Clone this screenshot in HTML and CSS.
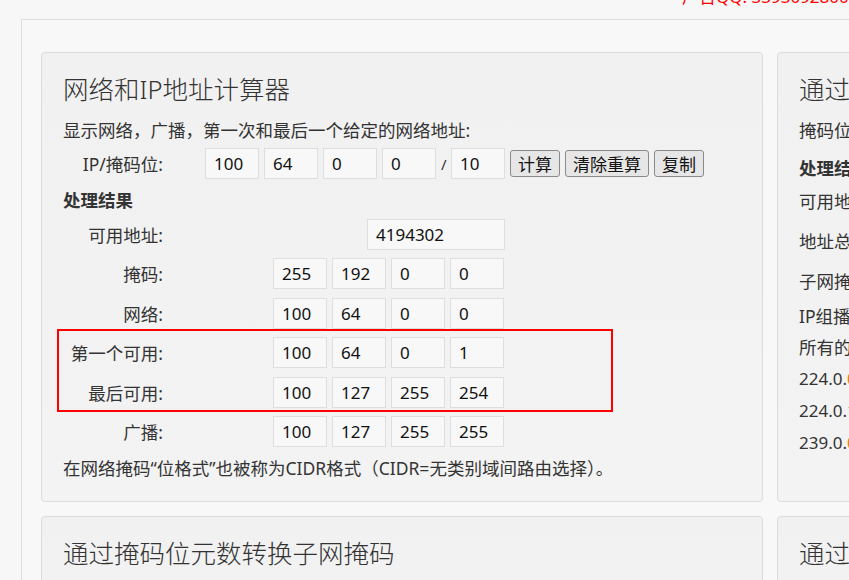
FILE: index.html
```html
<!DOCTYPE html>
<html lang="zh-CN">
<head>
    <meta charset="UTF-8">
    <title>网络和IP地址计算器</title>
    <link rel="stylesheet" href="styles.css">
</head>
<body>
    <div class="topbar"><div class="ad">广告QQ: 3393092800</div></div>
    <div class="wrap">
        <div class="grid">
            <div class="card">
                <h2>网络和IP地址计算器</h2>
                <p class="intro">显示网络，广播，第一次和最后一个给定的网络地址:</p>
                <div class="ip-row">
                    <label class="label">IP/掩码位:</label>
                    <div class="ip-fields">
                        <input class="box" value="100">
                        <input class="box" value="64">
                        <input class="box" value="0">
                        <input class="box" value="0">
                        <span class="slash">/</span>
                        <input class="box" value="10">
                        <button class="btn">计算</button>
                        <button class="btn">清除重算</button>
                        <button class="btn">复制</button>
                    </div>
                </div>
                <div class="result-title">处理结果</div>
                <div class="results">
                    <div class="res-row">
                        <span class="label">可用地址:</span>
                        <input class="box wide" value="4194302">
                    </div>
                    <div class="res-row">
                        <span class="label">掩码:</span>
                        <input class="box" value="255"><input class="box" value="192"><input class="box" value="0"><input class="box" value="0">
                    </div>
                    <div class="res-row">
                        <span class="label">网络:</span>
                        <input class="box" value="100"><input class="box" value="64"><input class="box" value="0"><input class="box" value="0">
                    </div>
                    <div class="highlight">
                        <div class="res-row">
                            <span class="label">第一个可用:</span>
                            <input class="box" value="100"><input class="box" value="64"><input class="box" value="0"><input class="box" value="1">
                        </div>
                        <div class="res-row">
                            <span class="label">最后可用:</span>
                            <input class="box" value="100"><input class="box" value="127"><input class="box" value="255"><input class="box" value="254">
                        </div>
                    </div>
                    <div class="res-row">
                        <span class="label">广播:</span>
                        <input class="box" value="100"><input class="box" value="127"><input class="box" value="255"><input class="box" value="255">
                    </div>
                </div>
                <p class="note">在网络掩码“位格式”也被称为CIDR格式（CIDR=无类别域间路由选择）。</p>
            </div>

            <div class="card">
                <h2>通过掩码位计算子网掩码</h2>
                <p class="side-line">掩码位数:</p>
                <p class="side-line bold">处理结果</p>
                <p class="side-line tall">可用地址:</p>
                <p class="side-line tall">地址总数:</p>
                <p class="side-line tall">子网掩码:</p>
                <p class="side-line">IP组播地址</p>
                <p class="side-line">所有的组播地址</p>
                <p class="side-line mono">224.0.<span class="hl">0</span>.0 - 224.0.0.255</p>
                <p class="side-line mono">224.0.1.0 - 238.255.255.255</p>
                <p class="side-line mono">239.0.<span class="hl">0</span>.0 - 239.255.255.255</p>
            </div>

            <div class="card">
                <h2>通过掩码位元数转换子网掩码</h2>
            </div>
            <div class="card">
                <h2>通过子网掩码转换掩码位元数</h2>
            </div>
        </div>
    </div>
</body>
</html>
```

FILE: styles.css
```css
body {
    margin: 0;
    background-color: #f7f7f7;
    color: #333;
    font-family: "Noto Sans", "Noto Sans CJK SC", sans-serif;
    font-size: 17.5px;
    overflow: hidden;
}
.topbar {
    height: 19px;
    padding-left: 682px;
    overflow: hidden;
}
.ad {
    margin-top: -13px;
    color: #f00;
    font-size: 17px;
    line-height: 20px;
    white-space: nowrap;
}
.wrap {
    margin-left: 21px;
    width: 1540px;
    border: 1px solid #ddd;
    border-bottom: none;
    background-color: #f8f8f8;
    padding: 32px 19px 0;
}
.grid {
    display: grid;
    grid-template-columns: 722px 722px;
    gap: 14px;
}
.card {
    background: linear-gradient(#f1f1f1, #f3f3f3);
    border: 1px solid #dcdcdc;
    border-radius: 4px;
    padding: 19px 21px 21px;
    min-height: 100px;
}
h2 {
    margin: 0 0 12px;
    font-size: 25.5px;
    font-weight: 300;
    line-height: 34px;
}
p {
    margin: 0;
}
.intro {
    line-height: 24px;
}
.ip-row {
    display: flex;
    margin-top: 6px;
    height: 31px;
    align-items: center;
}
.label {
    width: 100px;
    text-align: right;
    flex: none;
}
.ip-fields {
    display: flex;
    align-items: center;
    margin-left: 42px;
    gap: 5px;
}
.box {
    box-sizing: border-box;
    width: 54px;
    height: 31px;
    border: 1px solid #dedede;
    background-color: #f8f8f8;
    font-family: "Noto Sans", "Noto Sans CJK SC", sans-serif;
    font-size: 17px;
    color: #111;
    padding: 0 0 0 8px;
    margin: 0;
}
.slash {
    width: 5px;
    text-align: center;
    font-size: 15px;
}
.btn {
    height: 27px;
    padding: 0 7px;
    border: 1px solid #8a8a8a;
    border-radius: 3px;
    background-color: #e6e6e6;
    font-family: "Noto Sans CJK SC", sans-serif;
    font-size: 17px;
    color: #111;
    line-height: 25px;
}
.result-title {
    font-weight: 700;
    margin-top: 9px;
    line-height: 24px;
}
.results {
    display: flex;
    flex-direction: column;
    gap: 8.4px;
    margin-top: 7px;
}
.res-row {
    display: flex;
    align-items: center;
    height: 31px;
}
.res-row .label {
    margin-right: 110px;
}
.res-row .box + .box {
    margin-left: 5px;
}
.box.wide {
    width: 138px;
    margin-left: 94px;
}
.highlight {
    position: relative;
    display: flex;
    flex-direction: column;
    gap: 8.4px;
}
.highlight::after {
    content: "";
    position: absolute;
    left: -6px;
    top: -8px;
    width: 556px;
    height: 83px;
    box-sizing: border-box;
    border: 2px solid #f00;
}
.note {
    margin-top: 9px;
    line-height: 24px;
}
.side-line {
    line-height: 31px;
    white-space: nowrap;
}
.side-line:first-of-type {
    line-height: 24px;
    margin-top: 2px;
}
.side-line.bold {
    font-weight: 700;
    line-height: 26px;
    margin-top: 13px;
}
.side-line.tall {
    line-height: 40px;
}
.side-line.mono {
    font-size: 17px;
    line-height: 32px;
}
.hl {
    color: #e67e22;
}
```
